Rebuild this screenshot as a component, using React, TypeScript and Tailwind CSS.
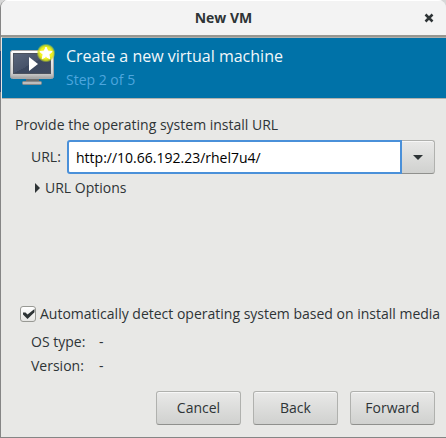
import { useState } from "react";

const buttonClass =
  "h-[34px] w-[85px] rounded-[3px] border border-[#b0b1ae] border-b-[#8f908d] bg-linear-to-b from-[#e9e9e8] to-[#d0d1cf] text-sm shadow-[inset_0_1px_#f7f7f7]";

function MachineIcon() {
  return (
    <svg width="46" height="42" viewBox="0 0 46 42" aria-hidden="true">
      <defs>
        <linearGradient id="frame" x1="0" y1="0" x2="0" y2="1">
          <stop offset="0" stopColor="#ffffff" />
          <stop offset="0.8" stopColor="#d2d2d2" />
          <stop offset="1" stopColor="#a0a0a0" />
        </linearGradient>
        <linearGradient id="screen" x1="0" y1="0" x2="1" y2="1">
          <stop offset="0" stopColor="#5b677c" />
          <stop offset="0.5" stopColor="#47536a" />
          <stop offset="0.5" stopColor="#3c485f" />
          <stop offset="1" stopColor="#3f4a60" />
        </linearGradient>
        <radialGradient id="glow">
          <stop offset="0.6" stopColor="#f2f21c" />
          <stop offset="0.8" stopColor="#d3df1b" stopOpacity="0.85" />
          <stop offset="1" stopColor="#b5d334" stopOpacity="0" />
        </radialGradient>
      </defs>
      <path d="M16 35h13v3H16z" fill="#6d6d6d" />
      <rect x="12.5" y="37.5" width="19" height="3" rx="1" fill="#bdbdbd" stroke="#8a8a8a" />
      <rect x="0.5" y="6.5" width="43" height="28" rx="2" fill="url(#frame)" stroke="#a5a7a9" />
      <rect x="3.500" y="9.500" width="37" height="20" fill="url(#screen)" stroke="#4c525e" />
      <path d="M19 13v14L28 20z" fill="#fff" />
      <circle cx="36" cy="9" r="9.500" fill="url(#glow)" />
      <path
        d="M36 3l1.800 4 4.400.5-3.300 3 .9 4.300L36 12.600l-3.800 2.200.9-4.300-3.300-3 4.400-.5z"
        fill="#fff"
        stroke="#fff"
        strokeLinejoin="round"
      />
    </svg>
  );
}

export default function App() {
  const [url, setUrl] = useState("http://10.66.192.23/rhel7u4/");
  const [detect, setDetect] = useState(true);

  return (
    <div className="bg-[#d8d8d8] font-['Open_Sans',sans-serif] text-sm text-[#2e3436]">
      <main className="flex min-h-screen flex-col overflow-hidden rounded-t-lg border-b border-l border-[#858585] bg-[#e8e8e6]">
        <header className="grid h-[37px] shrink-0 grid-cols-[1fr_auto_1fr] items-center border-t border-b-2 border-t-white border-b-[#979791] bg-[#f3f3f3]">
          <span />
          <h1 className="text-sm font-bold">New VM</h1>
          <button type="button" aria-label="Close" className="mr-3 justify-self-end">
            <svg width="10" height="10" viewBox="0 0 10 10" aria-hidden="true">
              <path d="M1.500 1.500l7 7M8.500 1.500l-7 7" stroke="#2e3436" strokeWidth="2.500" />
            </svg>
          </button>
        </header>

        <section className="relative ml-px flex h-[62px] shrink-0 items-start gap-2.5 border-t border-b border-[#b1b1ad] bg-[#0072a8] pt-1.5 pl-2">
          <MachineIcon />
          <div>
            <h2 className="text-base leading-6 text-[#f2f7fa]">Create a new virtual machine</h2>
            <p className="text-sm leading-6 text-[#4da6de]">Step 2 of 5</p>
          </div>
        </section>

        <form className="flex grow flex-col pr-[11px] pb-3 pl-3.5" onSubmit={(e) => e.preventDefault()}>
          <p className="mt-4 leading-5">Provide the operating system install URL</p>
          <div className="mt-[5px] flex items-center pl-4">
            <label htmlFor="url" className="w-9 shrink-0">
              URL:
            </label>
            <input
              id="url"
              type="text"
              value={url}
              onChange={(e) => setUrl(e.target.value)}
              className="h-[34px] min-w-0 grow rounded-l-[3px] border-2 border-[#4a90d9] bg-white px-[7px] text-sm text-black outline-none"
            />
            <button
              type="button"
              aria-label="Show recent URLs"
              className="flex h-[34px] w-[33px] shrink-0 items-center justify-center rounded-r-[3px] border border-l-0 border-[#b0b1ae] border-b-[#8f908d] bg-linear-to-b from-[#e9e9e8] to-[#d0d1cf] shadow-[inset_0_1px_#f7f7f7]"
            >
              <svg width="10" height="5" viewBox="0 0 10 5" aria-hidden="true">
                <path d="M0 0h10L5 5z" fill="#2e3436" />
              </svg>
            </button>
          </div>
          <button type="button" aria-expanded="false" className="mt-1 flex items-center gap-[5px] self-start pl-5 leading-5">
            <svg width="5" height="10" viewBox="0 0 5 10" aria-hidden="true">
              <path d="M0 0v10L5 5z" fill="#2e3436" />
            </svg>
            URL Options
          </button>

          <div className="mt-auto">
            <label className="flex items-center gap-1 pl-[5px] leading-5 whitespace-nowrap">
              <span className="relative flex size-4 shrink-0">
                <input
                  type="checkbox"
                  checked={detect}
                  onChange={(e) => setDetect(e.target.checked)}
                  className="peer size-4 appearance-none rounded-[3px] border border-[#989994] bg-linear-to-b from-white to-[#e6e6e4]"
                />
                <svg
                  viewBox="0 0 16 16"
                  className="pointer-events-none absolute inset-0 hidden size-4 peer-checked:block"
                  aria-hidden="true"
                >
                  <path d="M3 6.500h2.500L7.500 8.500 14.500 3v3.200L7.500 13 3 8.500z" fill="#2e3436" />
                </svg>
              </span>
              Automatically detect operating system based on install media
            </label>
            <dl className="mt-2 grid grid-cols-[68px_1fr] gap-y-1 pl-4 leading-5">
              <dt>OS type:</dt>
              <dd>-</dd>
              <dt>Version:</dt>
              <dd>-</dd>
            </dl>
          </div>
          <div className="mt-[15px] flex justify-end gap-3">
            <button type="button" className={buttonClass}>
              Cancel
            </button>
            <button type="button" className={buttonClass}>
              Back
            </button>
            <button type="submit" className={buttonClass}>
              Forward
            </button>
          </div>
        </form>
      </main>
      <span className="absolute top-[51px] left-0 h-[41px] w-px bg-[#2c4a78]" aria-hidden="true" />
    </div>
  );
}
